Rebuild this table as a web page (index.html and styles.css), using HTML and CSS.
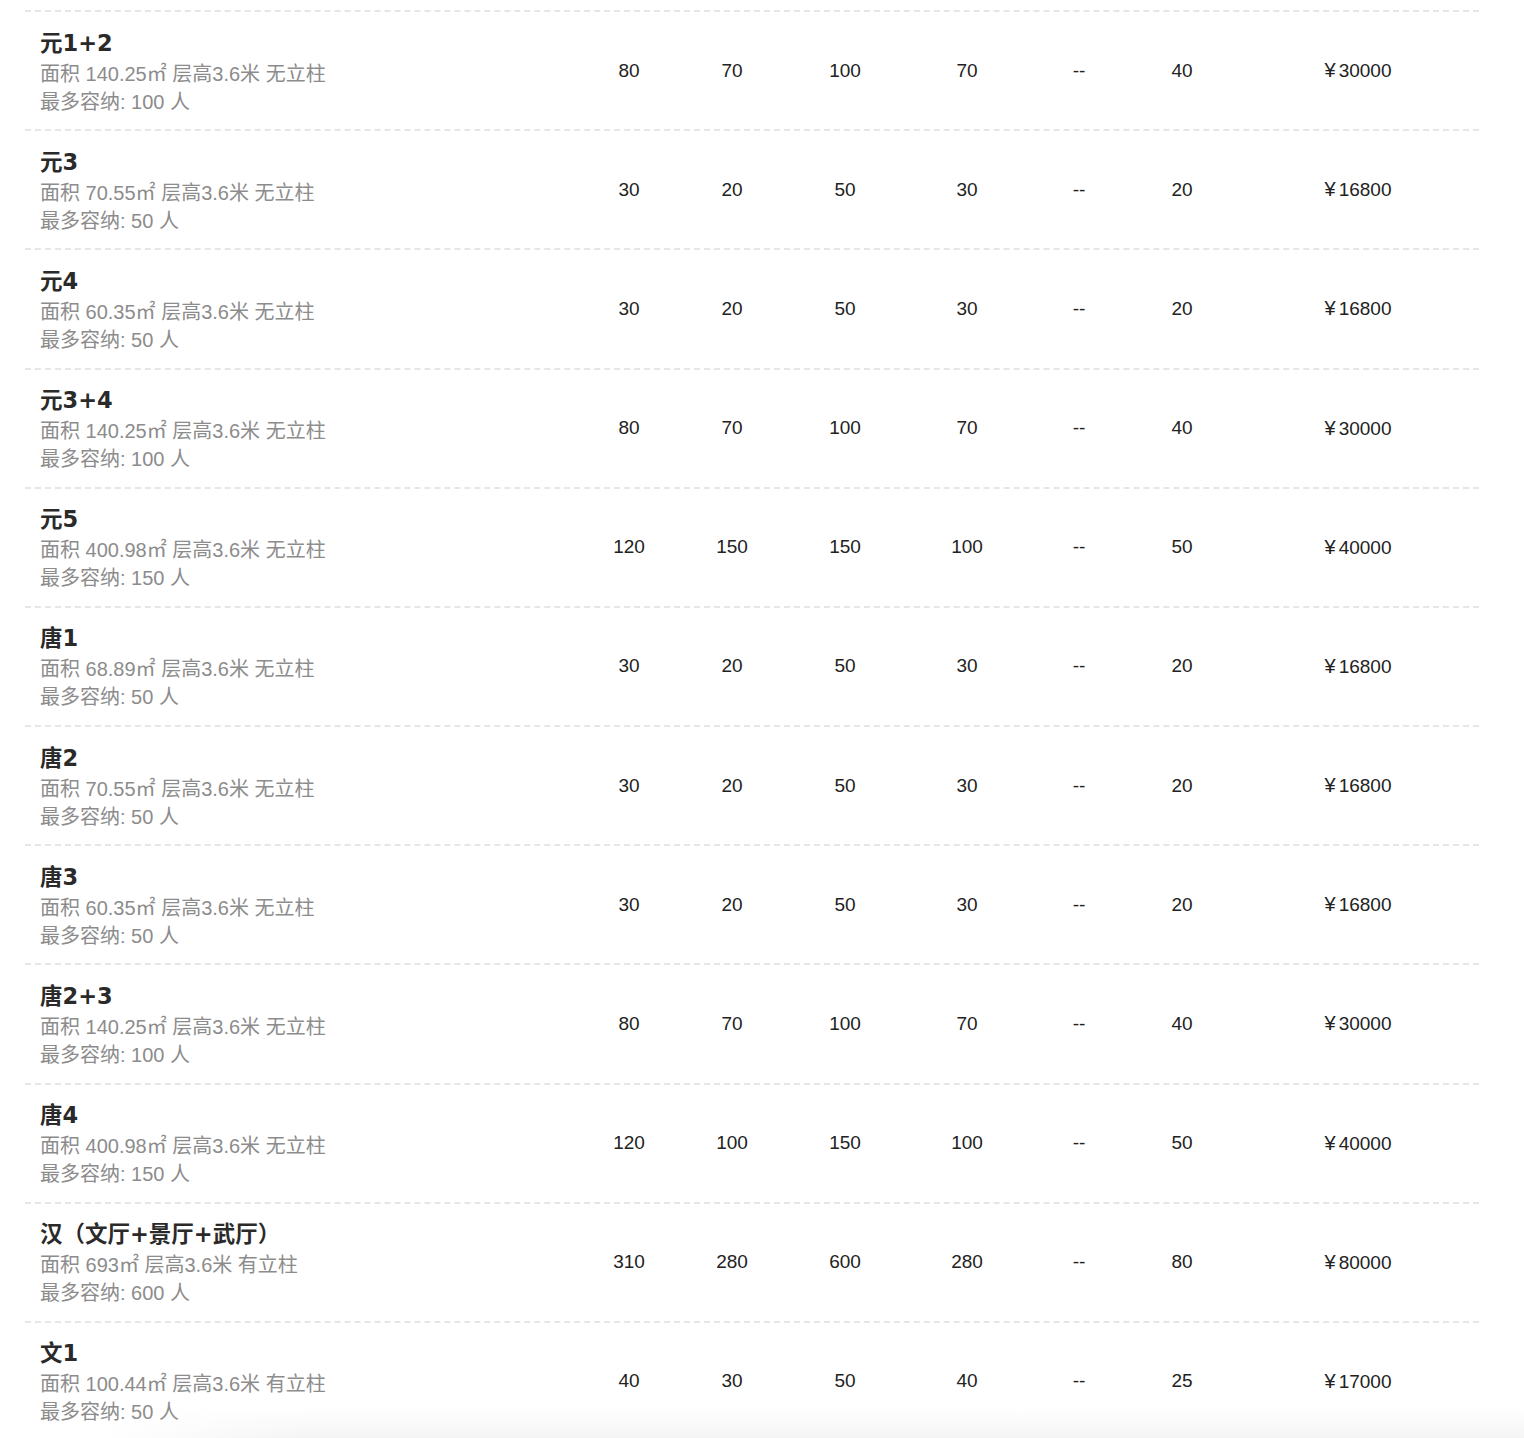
FILE: index.html
```html
<!DOCTYPE html>
<html lang="zh-CN">
<head>
<meta charset="utf-8">
<title>会议室</title>
<link rel="stylesheet" href="styles.css">
</head>
<body>
<div class="rooms">
  <div class="row">
    <div class="info"><div class="name">元1+2</div><div class="desc">面积 140.25㎡ 层高3.6米 无立柱</div><div class="desc">最多容纳: 100 人</div></div>
    <div class="cell">80</div><div class="cell">70</div><div class="cell">100</div><div class="cell">70</div><div class="cell">--</div><div class="cell">40</div><div class="cell price"><span class="yen">¥</span>30000</div>
  </div>
  <div class="row">
    <div class="info"><div class="name">元3</div><div class="desc">面积 70.55㎡ 层高3.6米 无立柱</div><div class="desc">最多容纳: 50 人</div></div>
    <div class="cell">30</div><div class="cell">20</div><div class="cell">50</div><div class="cell">30</div><div class="cell">--</div><div class="cell">20</div><div class="cell price"><span class="yen">¥</span>16800</div>
  </div>
  <div class="row">
    <div class="info"><div class="name">元4</div><div class="desc">面积 60.35㎡ 层高3.6米 无立柱</div><div class="desc">最多容纳: 50 人</div></div>
    <div class="cell">30</div><div class="cell">20</div><div class="cell">50</div><div class="cell">30</div><div class="cell">--</div><div class="cell">20</div><div class="cell price"><span class="yen">¥</span>16800</div>
  </div>
  <div class="row">
    <div class="info"><div class="name">元3+4</div><div class="desc">面积 140.25㎡ 层高3.6米 无立柱</div><div class="desc">最多容纳: 100 人</div></div>
    <div class="cell">80</div><div class="cell">70</div><div class="cell">100</div><div class="cell">70</div><div class="cell">--</div><div class="cell">40</div><div class="cell price"><span class="yen">¥</span>30000</div>
  </div>
  <div class="row">
    <div class="info"><div class="name">元5</div><div class="desc">面积 400.98㎡ 层高3.6米 无立柱</div><div class="desc">最多容纳: 150 人</div></div>
    <div class="cell">120</div><div class="cell">150</div><div class="cell">150</div><div class="cell">100</div><div class="cell">--</div><div class="cell">50</div><div class="cell price"><span class="yen">¥</span>40000</div>
  </div>
  <div class="row">
    <div class="info"><div class="name">唐1</div><div class="desc">面积 68.89㎡ 层高3.6米 无立柱</div><div class="desc">最多容纳: 50 人</div></div>
    <div class="cell">30</div><div class="cell">20</div><div class="cell">50</div><div class="cell">30</div><div class="cell">--</div><div class="cell">20</div><div class="cell price"><span class="yen">¥</span>16800</div>
  </div>
  <div class="row">
    <div class="info"><div class="name">唐2</div><div class="desc">面积 70.55㎡ 层高3.6米 无立柱</div><div class="desc">最多容纳: 50 人</div></div>
    <div class="cell">30</div><div class="cell">20</div><div class="cell">50</div><div class="cell">30</div><div class="cell">--</div><div class="cell">20</div><div class="cell price"><span class="yen">¥</span>16800</div>
  </div>
  <div class="row">
    <div class="info"><div class="name">唐3</div><div class="desc">面积 60.35㎡ 层高3.6米 无立柱</div><div class="desc">最多容纳: 50 人</div></div>
    <div class="cell">30</div><div class="cell">20</div><div class="cell">50</div><div class="cell">30</div><div class="cell">--</div><div class="cell">20</div><div class="cell price"><span class="yen">¥</span>16800</div>
  </div>
  <div class="row">
    <div class="info"><div class="name">唐2+3</div><div class="desc">面积 140.25㎡ 层高3.6米 无立柱</div><div class="desc">最多容纳: 100 人</div></div>
    <div class="cell">80</div><div class="cell">70</div><div class="cell">100</div><div class="cell">70</div><div class="cell">--</div><div class="cell">40</div><div class="cell price"><span class="yen">¥</span>30000</div>
  </div>
  <div class="row">
    <div class="info"><div class="name">唐4</div><div class="desc">面积 400.98㎡ 层高3.6米 无立柱</div><div class="desc">最多容纳: 150 人</div></div>
    <div class="cell">120</div><div class="cell">100</div><div class="cell">150</div><div class="cell">100</div><div class="cell">--</div><div class="cell">50</div><div class="cell price"><span class="yen">¥</span>40000</div>
  </div>
  <div class="row">
    <div class="info"><div class="name">汉（文厅+景厅+武厅）</div><div class="desc">面积 693㎡ 层高3.6米 有立柱</div><div class="desc">最多容纳: 600 人</div></div>
    <div class="cell">310</div><div class="cell">280</div><div class="cell">600</div><div class="cell">280</div><div class="cell">--</div><div class="cell">80</div><div class="cell price"><span class="yen">¥</span>80000</div>
  </div>
  <div class="row">
    <div class="info"><div class="name">文1</div><div class="desc">面积 100.44㎡ 层高3.6米 有立柱</div><div class="desc">最多容纳: 50 人</div></div>
    <div class="cell">40</div><div class="cell">30</div><div class="cell">50</div><div class="cell">40</div><div class="cell">--</div><div class="cell">25</div><div class="cell price"><span class="yen">¥</span>17000</div>
  </div>
</div>
<div class="bottom-shade"></div>
</body>
</html>
```
FILE: styles.css
```css
html, body {
  margin: 0;
  padding: 0;
  background: #ffffff;
}
body {
  font-family: "Liberation Sans", "Noto Sans CJK SC", sans-serif;
  color: #333333;
  padding-top: 10px;
}
.rooms {
  margin-left: 25px;
  width: 1454px;
}
.row {
  display: grid;
  grid-template-columns: 554px 100px 106px 120px 124px 100px 106px 244px;
  align-items: center;
  height: 119.18px;
  box-sizing: border-box;
  border-top: 2px dashed #e6e6e6;
}
.info {
  padding-left: 15px;
}
.name {
  font-family: "DejaVu Sans", "Noto Sans CJK SC", sans-serif;
  font-weight: bold;
  font-size: 22.5px;
  line-height: 34px;
  color: #2a2a2a;
  text-spacing-trim: space-all;
  font-feature-settings: "chws" 0, "halt" 0;
}
.desc {
  font-size: 20px;
  line-height: 28px;
  color: #8c8c8c;
}
.cell {
  text-align: center;
  font-size: 19px;
  color: #222222;
}
.price {
  padding-left: 2px;
}
.yen {
  display: inline-block;
  font-size: 20px;
  margin-right: 3px;
}
.bottom-shade {
  position: fixed;
  left: 0;
  right: 0;
  bottom: 0;
  height: 30px;
  background: linear-gradient(to bottom, rgba(240,240,240,0), rgba(240,240,240,0.7));
  -webkit-mask-image: linear-gradient(to right, transparent 100px, #000 300px);
  mask-image: linear-gradient(to right, transparent 100px, #000 300px);
  pointer-events: none;
}
```
